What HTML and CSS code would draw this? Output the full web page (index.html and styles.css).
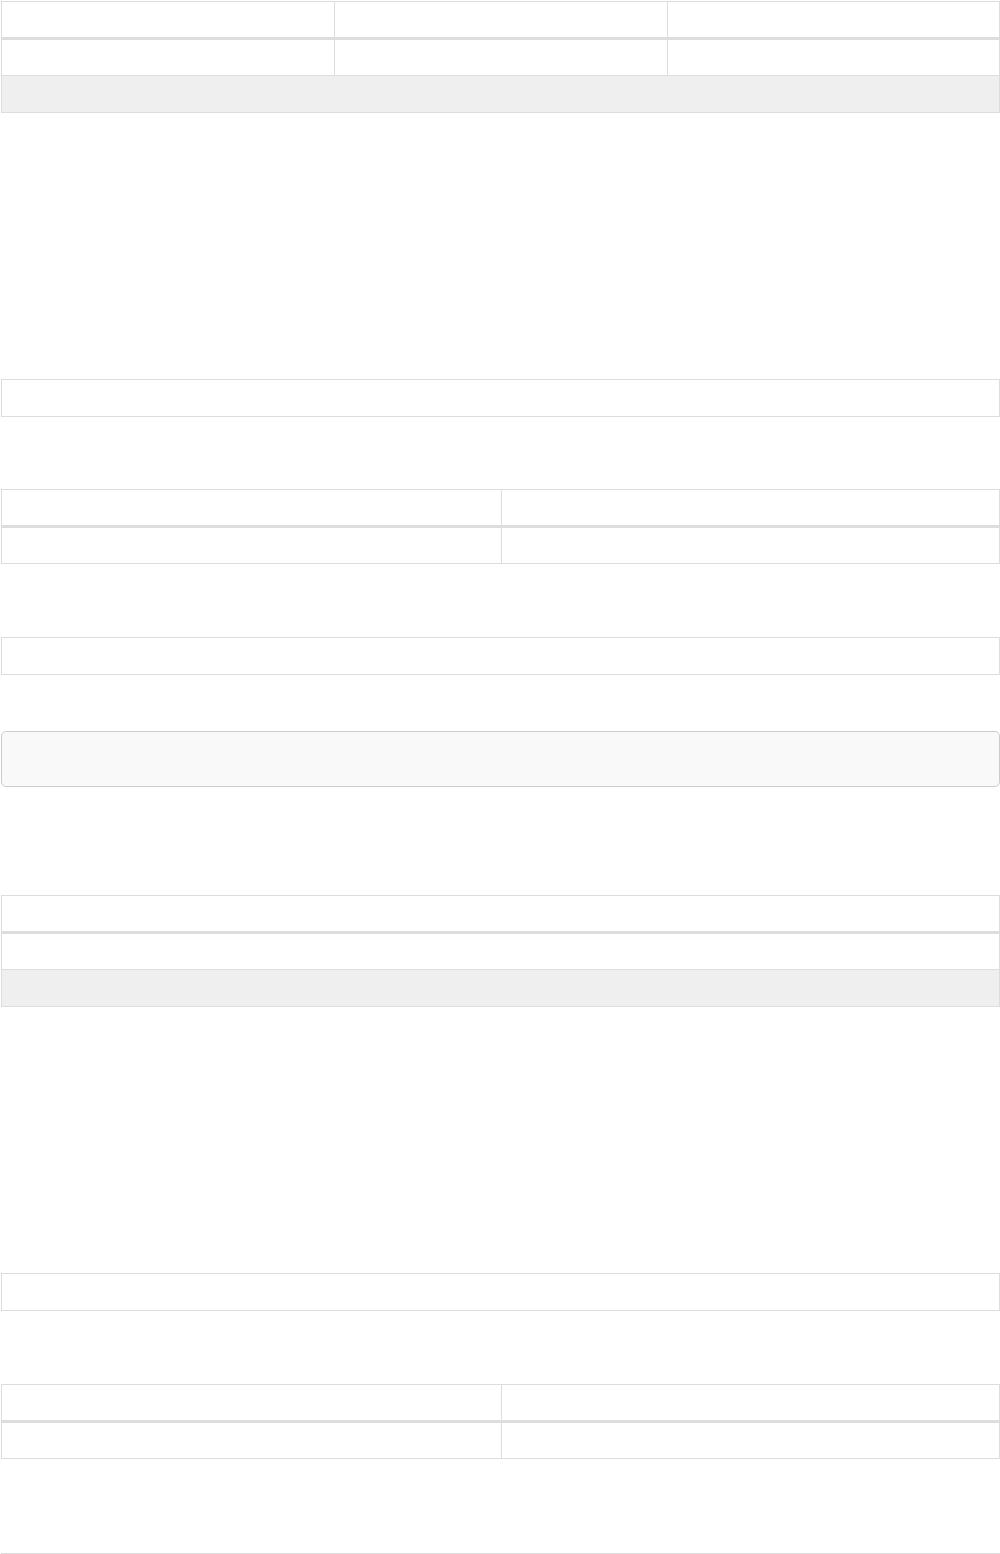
FILE: index.html
```html
<!DOCTYPE html>
<html>
<head>
<meta charset="utf-8">
<link rel="stylesheet" href="styles.css">
</head>
<body>
<main class="page">
  <div class="tbl gap-a">
    <div class="tr th cols-3"><div class="td"></div><div class="td"></div><div class="td"></div></div>
    <div class="tr cols-3"><div class="td"></div><div class="td"></div><div class="td"></div></div>
    <div class="tr foot"><div class="td"></div></div>
  </div>

  <div class="tbl gap-b">
    <div class="tr single"><div class="td"></div></div>
  </div>

  <div class="tbl gap-c">
    <div class="tr th cols-2"><div class="td"></div><div class="td"></div></div>
    <div class="tr cols-2"><div class="td"></div><div class="td"></div></div>
  </div>

  <div class="tbl gap-d">
    <div class="tr single"><div class="td"></div></div>
  </div>

  <div class="well gap-e"></div>

  <div class="tbl gap-a">
    <div class="tr th"><div class="td"></div></div>
    <div class="tr"><div class="td"></div></div>
    <div class="tr foot"><div class="td"></div></div>
  </div>

  <div class="tbl gap-c">
    <div class="tr single"><div class="td"></div></div>
  </div>

  <div class="tbl gap-f">
    <div class="tr th cols-2"><div class="td"></div><div class="td"></div></div>
    <div class="tr cols-2"><div class="td"></div><div class="td"></div></div>
  </div>

  <div class="tbl">
    <div class="tr single"><div class="td"></div></div>
  </div>
</main>
</body>
</html>
```

FILE: styles.css
```css
html, body {
  margin: 0;
  padding: 0;
  background: #fff;
  font-family: "Liberation Sans", Arial, sans-serif;
  font-size: 14px;
}

.page {
  padding: 1px 0 0 1px;
  width: 999px;
}

.tbl {
  border: 1px solid #ddd;
  box-sizing: border-box;
  width: 999px;
}

.tr {
  display: grid;
  grid-template-columns: 1fr;
  height: 36px;
}

.tr + .tr {
  border-top: 1px solid #ddd;
}

.tr.th {
  height: 35px;
  border-bottom: 3px solid #ddd;
}

.tr.th + .tr {
  border-top: 0;
  height: 35px;
}

.cols-3 { grid-template-columns: repeat(3, 1fr); }
.cols-2 { grid-template-columns: repeat(2, 1fr); }

.td + .td {
  border-left: 1px solid #ddd;
}

.foot {
  background: #efefef;
}

.well {
  box-sizing: border-box;
  width: 999px;
  height: 56px;
  border: 1px solid #ccc;
  border-radius: 5px;
  background: #f9f9f9;
}

.gap-a { margin-bottom: 266px; }
.gap-b { margin-bottom: 72px; }
.gap-c { margin-bottom: 73px; }
.gap-d { margin-bottom: 56px; }
.gap-e { margin-bottom: 108px; }
.gap-f { margin-bottom: 94px; }
```
